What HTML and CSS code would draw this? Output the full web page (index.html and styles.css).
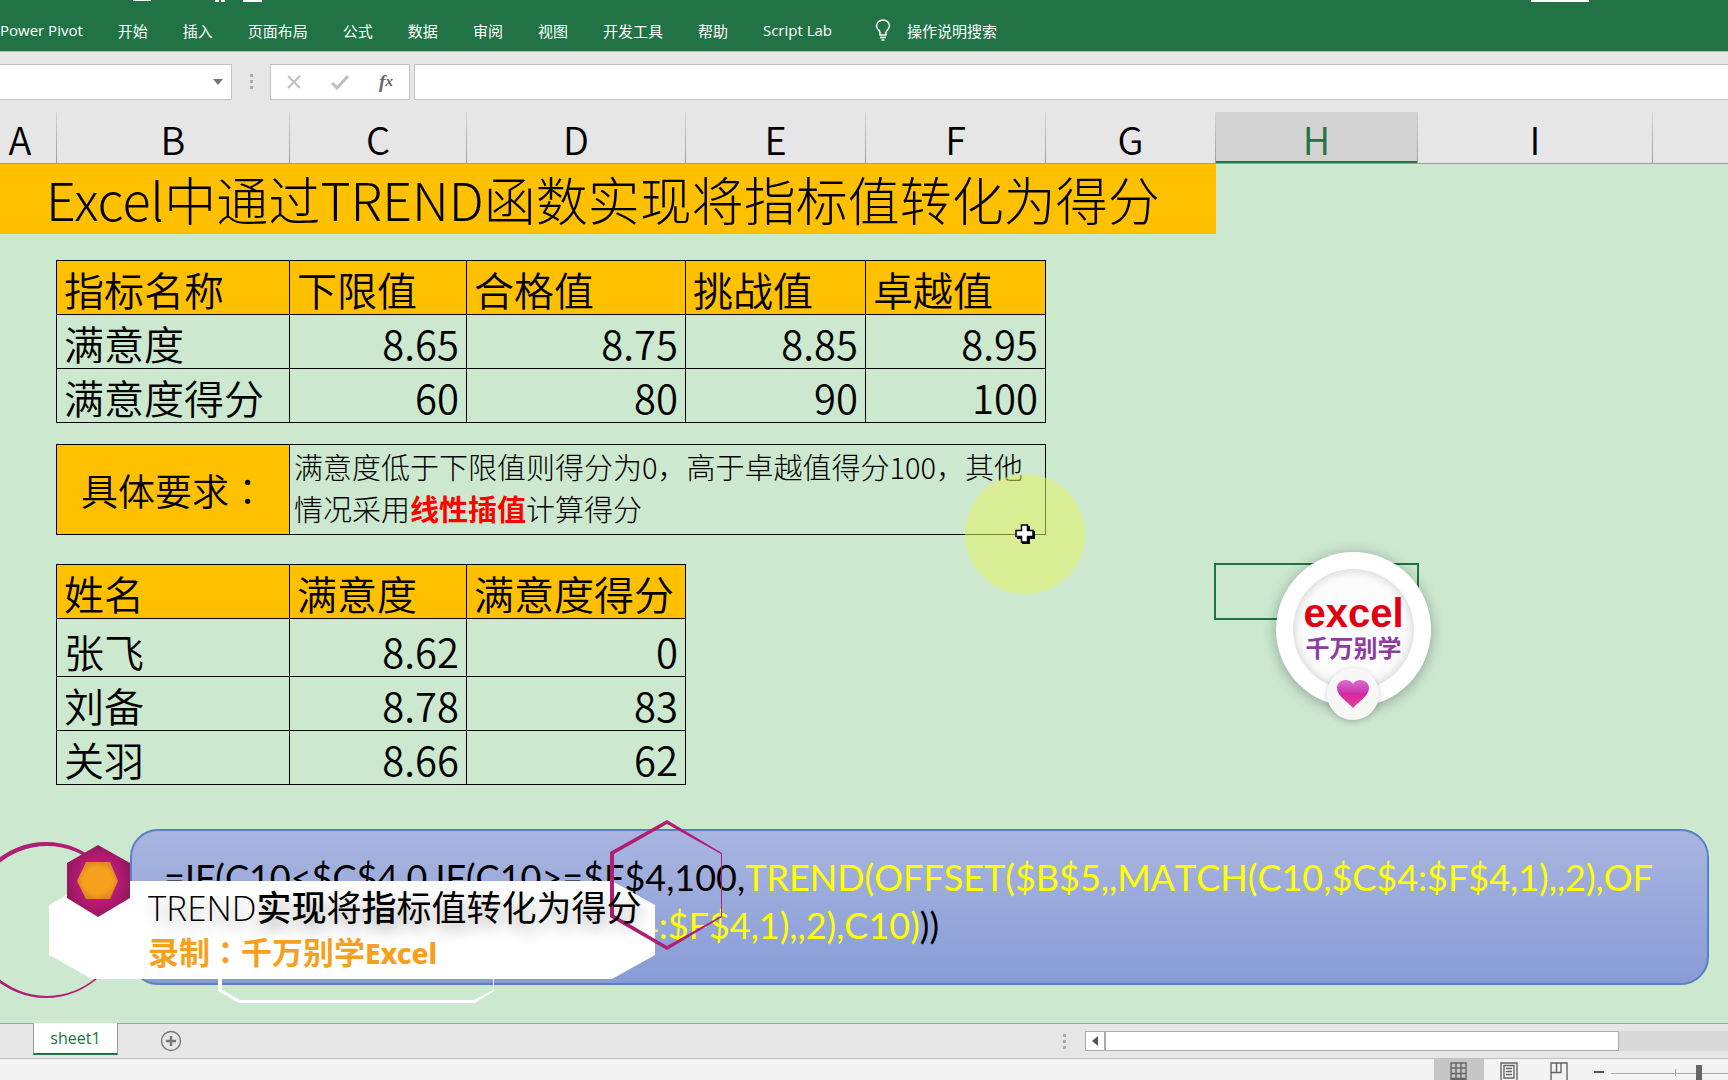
FILE: index.html
```html
<!DOCTYPE html>
<html lang="zh-CN">
<head>
<meta charset="utf-8">
<title>Excel - sheet1</title>
<link rel="stylesheet" href="styles.css">
</head>
<body>
<header class="ribbon">
  <svg class="quick-access" width="1728" height="2" aria-hidden="true"><path d="M133 0h18v1h-18zM215 0h4v2h-4zM221 0h4v2h-4zM243 0h19v2h-19zM1531 0h58v2h-58z" fill="#fff"/></svg>
  <nav class="ribbon-tabs">
    <a href="#">Power Pivot</a><a href="#">开始</a><a href="#">插入</a><a href="#">页面布局</a><a href="#">公式</a><a href="#">数据</a><a href="#">审阅</a><a href="#">视图</a><a href="#">开发工具</a><a href="#">帮助</a><a href="#">Script Lab</a>
    <a href="#" class="tell-me"><svg width="16" height="22" viewBox="0 0 16 22" fill="none" stroke="#fff" stroke-width="1.5" aria-hidden="true"><path d="M5 16v-3C4 11 1.500 9.800 1.500 7a6.500 6 0 0 1 13 0c0 2.800-2.500 4-3.500 6v3zM5 18.500h6M6.500 21h3"/></svg>操作说明搜索</a>
  </nav>
</header>

<div class="formula-bar">
  <button class="name-box" aria-label="名称框"><svg width="10" height="6" aria-hidden="true"><path d="M0 0h10L5 6z" fill="#777"/></svg></button>
  <span class="grip"></span>
  <div class="formula-tools">
    <button aria-label="取消"><svg width="16" height="16" viewBox="0 0 16 16" stroke="#bfbfbf" stroke-width="2" aria-hidden="true"><path d="M2 2l12 12M14 2L2 14"/></svg></button>
    <button aria-label="输入"><svg width="18" height="16" viewBox="0 0 18 16" fill="none" stroke="#bfbfbf" stroke-width="3" aria-hidden="true"><path d="M1 9l5 5L17 2"/></svg></button>
    <button aria-label="插入函数" class="fx">f<sub>x</sub></button>
  </div>
  <input class="formula-input" type="text" aria-label="编辑栏">
</div>

<div class="column-heads">
  <span>A</span><span>B</span><span>C</span><span>D</span><span>E</span><span>F</span><span>G</span><span class="active">H</span><span>I</span><span></span>
</div>

<main class="sheet">
  <h1 class="sheet-title">Excel中通过TREND函数实现将指标值转化为得分</h1>

  <table class="grid scale">
    <colgroup><col class="col-b"><col class="col-c"><col class="col-d"><col class="col-e"><col class="col-f"></colgroup>
    <thead><tr><th>指标名称</th><th>下限值</th><th>合格值</th><th>挑战值</th><th>卓越值</th></tr></thead>
    <tbody>
      <tr><td>满意度</td><td>8.65</td><td>8.75</td><td>8.85</td><td>8.95</td></tr>
      <tr><td>满意度得分</td><td>60</td><td>80</td><td>90</td><td>100</td></tr>
    </tbody>
  </table>

  <table class="grid rule">
    <colgroup><col class="col-b"><col></colgroup>
    <tbody><tr><th>具体要求<span class="colon" lang="zh-TW">：</span></th><td>满意度低于下限值则得分为0，高于卓越值得分100，其他<br>情况采用<strong>线性插值</strong>计算得分</td></tr></tbody>
  </table>

  <table class="grid people">
    <colgroup><col class="col-b"><col class="col-c"><col class="col-d"></colgroup>
    <thead><tr><th>姓名</th><th>满意度</th><th>满意度得分</th></tr></thead>
    <tbody>
      <tr class="tall"><td>张飞</td><td>8.62</td><td>0</td></tr>
      <tr><td>刘备</td><td>8.78</td><td>83</td></tr>
      <tr><td>关羽</td><td>8.66</td><td>62</td></tr>
    </tbody>
  </table>

  <div class="formula-card">=IF(C10&lt;$C$4,0,IF(C10&gt;=$F$4,100,<em>TREND(OFFSET($B$5,,MATCH(C10,$C$4:$F$4,1),,2),OF<br>FSET($B$4,,MATCH(C10,$C$4:$F$4,1),,2),C10)</em>))</div>

  <div class="selection"></div>

  <div class="badge">
    <span class="badge-face"><b>excel</b><i>千万别学</i></span>
    <span class="badge-heart"><svg width="32" height="28" viewBox="0 0 32 28" aria-hidden="true"><defs><linearGradient id="heart" x2="0" y2="1"><stop offset="0" stop-color="#dc6bcf"/><stop offset=".4" stop-color="#c93fb5"/><stop offset=".5" stop-color="#d9269c"/><stop offset="1" stop-color="#e0409e"/></linearGradient></defs><path d="M16 28C11 22 0 16 0 8 0 0 12-3 16 4c4-7 16-4 16 4 0 8-11 14-16 20z" fill="url(#heart)"/></svg></span>
  </div>

  <div class="pointer"><svg width="20" height="20" viewBox="0 0 20 20" aria-hidden="true"><path d="M7 2h8v5h5v8h-5v5H7v-5H2V7h5z"/><path d="M6.500 1h6v5.500H18v6h-5.500V18h-6v-5.500H1v-6h5.500z" fill="#fff" stroke="#000" stroke-width="1.500"/></svg></div>

  <div class="caption">
    <svg class="caption-art" width="740" height="190" viewBox="0 818 740 190" aria-hidden="true">
      <defs>
        <radialGradient id="plum"><stop offset=".5" stop-color="#c5187c"/><stop offset="1" stop-color="#94195f"/></radialGradient>
        <radialGradient id="amber"><stop offset=".7" stop-color="#f7a01d"/><stop offset="1" stop-color="#dc8a20"/></radialGradient>
      </defs>
      <path fill-rule="evenodd" fill="#b01f74" d="M46 842a78 78 0 1 1 0 156 78 78 0 1 1 0-156zm1 4a75 75 0 1 0 0 150 75 75 0 1 0 0-150z"/>
      <path d="M92 881H612L655 905V955L612 979H92L49 955V905z" fill="#fff"/>
      <path d="M218 979v12l21 12h236l19-12v-12h-1v11l-19 10H240l-18-10v-11z" fill="#fff"/>
      <path fill-rule="evenodd" fill="#b01f74" d="M667 820l55 33v64l-55 33-57-33v-65zm0 4l-53 30v61l53 31 54-30v-62z"/>
      <path d="M98 845l32 18v35l-32 19-31-19v-35z" fill="url(#plum)"/>
      <path d="M86 862h24l8 19-8 18H86l-9-18z" fill="url(#amber)"/>
    </svg>
    <p class="caption-title"><span>TREND</span><b>实现</b>将<b>指</b>标值转化为得分</p>
    <p class="caption-author">录制<span class="colon" lang="zh-TW">：</span>千万别学<span class="brand">Excel</span></p>
  </div>
</main>

<div class="sheet-bar">
  <button class="sheet-tab">sheet1</button>
  <button class="add-sheet" aria-label="新工作表"><svg width="22" height="22" viewBox="0 0 22 22" fill="none" stroke="#777" aria-hidden="true"><circle cx="11" cy="11" r="9.500" stroke-width="1.400"/><path d="M6 11h10M11 6v10" stroke-width="2.400"/></svg></button>
  <span class="grip"></span>
  <div class="scroller"><button class="scroll-left" aria-label="向左滚动"><svg width="6" height="10" aria-hidden="true"><path d="M6 0v10L0 5z" fill="#555"/></svg></button><span class="scroll-thumb"></span></div>
</div>

<footer class="status-bar">
  <button class="view active" aria-label="普通"><svg width="18" height="18" viewBox="0 0 18 18" fill="none" stroke="#666" stroke-width="1.400" aria-hidden="true"><path d="M1 1h15v17H1zM6 1v17M11 1v17M1 6h15M1 11.500h15M1 16.500h15"/></svg></button>
  <button class="view" aria-label="页面布局视图"><svg width="18" height="18" viewBox="0 0 18 18" fill="none" stroke="#666" stroke-width="1.400" aria-hidden="true"><path d="M1 1h16v18H1zM4 3.500h10V16H4zM6 6.500h6M6 9.500h6M6 12.500h6"/></svg></button>
  <button class="view" aria-label="分页预览"><svg width="18" height="18" viewBox="0 0 18 18" fill="none" stroke="#666" stroke-width="1.400" aria-hidden="true"><path d="M1 1h16v18H1zM1 10.500h10V1M6.500 1v9.500"/></svg></button>
  <svg class="zoom-slider" width="134" height="21" viewBox="0 0 134 21" aria-hidden="true"><path d="M0 13h10" stroke="#555" stroke-width="2"/><path d="M17 14.500h117M81.500 10v7" stroke="#aaa"/><path d="M102 6h6v15h-6z" fill="#666"/></svg>
</footer>
</body>
</html>
```
FILE: styles.css
```css
* { box-sizing: border-box; }

body {
  margin: 0;
  height: 100vh;
  display: flex;
  flex-direction: column;
  overflow: hidden;
  background: #e6e6e6;
  color: #000;
  font-family: "Noto Sans CJK SC", sans-serif;
}

button {
  border: 0;
  padding: 0;
  background: none;
  font: inherit;
  display: flex;
  align-items: center;
  justify-content: center;
}

/* Ribbon */
.ribbon {
  position: relative;
  flex: none;
  height: 52px;
  background: #217346;
  border-bottom: 1px solid #a3c2b0;
}
.quick-access { position: absolute; top: 0; left: 0; }
.ribbon-tabs {
  display: flex;
  align-items: center;
  gap: 35px;
  height: 60px;
  font-family: "Open Sans", "Noto Sans CJK SC", sans-serif;
  font-size: 15px;
  white-space: nowrap;
}
.ribbon-tabs a { color: #fff; text-decoration: none; }
.ribbon-tabs .tell-me { display: flex; align-items: center; gap: 16px; margin-left: 8px; }

/* Formula bar */
.formula-bar {
  flex: none;
  display: flex;
  align-items: center;
  height: 60px;
  padding-bottom: 1px;
}
.name-box, .formula-tools, .formula-input {
  height: 36px;
  background: #fff;
  border: 1px solid #c3c3c3;
}
.name-box {
  width: 232px;
  border-left: 0;
  justify-content: flex-end;
  padding-right: 8px;
}
.grip {
  width: 3px;
  height: 15px;
  background: repeating-linear-gradient(#aaa 0 3px, transparent 3px 6px);
}
.formula-bar .grip { margin: 0 17px 0 18px; }
.formula-tools {
  display: grid;
  grid-template-columns: repeat(3, 46px);
  width: 140px;
}
.fx {
  font: italic bold 19px "Liberation Serif", serif;
  color: #666;
}
.fx sub { font-size: 15px; line-height: 1; }
.formula-input { flex: 1; margin-left: 4px; border-right: 0; }

/* Column letters */
.column-heads {
  flex: none;
  display: grid;
  grid-template-columns: 57px 233px 177px 219px 180px 180px 170px 202px 235px 1fr;
  grid-template-rows: 100%;
  height: 52px;
  border-bottom: 1px solid #9b9b9b;
  font-size: 38px;
  font-weight: 350;
  line-height: 54px;
  text-align: center;
}
.column-heads span {
  border-right: 1px solid;
  border-image: linear-gradient(#d4d4d4, #9b9b9b) 1;
}
.column-heads span:first-child { padding-right: 16px; }
.column-heads span:last-child { border: 0; }
.column-heads .active {
  background: #d2d2d2;
  color: #217346;
  box-shadow: inset 0 -2px #217346;
}

/* Worksheet */
.sheet {
  position: relative;
  flex: 1;
  min-height: 0;
  overflow: hidden;
  background: #cce8cf;
}
.sheet-title {
  margin: 0 0 26px;
  width: 1216px;
  padding-left: 46px;
  background: #ffc000;
  font-size: 52px;
  font-weight: 300;
  line-height: 70px;
  white-space: nowrap;
}
.grid {
  table-layout: fixed;
  border-collapse: collapse;
  margin-left: 56px;
  font-size: 40px;
  line-height: 48px;
  white-space: nowrap;
}
.grid th, .grid td {
  border: 1px solid #000;
  padding: 2px 7px 0;
  text-align: right;
  font-weight: 350;
}
.grid th { background: #ffc000; }
.grid th, .grid td:first-child { text-align: left; }
.grid tr { height: 54px; }
.grid .tall { height: 58px; }
.grid .tall td { padding-top: 6px; }
.col-b { width: 233px; }
.col-c { width: 177px; }
.col-d { width: 219px; }
.col-e, .col-f { width: 180px; }
.scale, .rule { width: 990px; }
.people { width: 630px; }
.rule { margin-top: 21px; margin-bottom: 29px; }
.rule tr { height: 90px; }
.grid.rule th { font-size: 37px; padding: 0 0 0 24px; }
.grid.rule td {
  padding: 0 4px;
  font-size: 29px;
  font-weight: 300;
  line-height: 42px;
  text-align: left;
  vertical-align: top;
}
.rule strong { color: #f00; font-weight: 700; }

.formula-card {
  margin: 44px 19px 0 130px;
  height: 156px;
  padding: 22px 32px;
  border: 2px solid #5b7fc4;
  border-radius: 28px;
  background: linear-gradient(#a9b5e0, #879cd6);
  font: 36px/48px Lato, sans-serif;
  font-kerning: none;
  white-space: nowrap;
}
.formula-card em { color: #ff0; font-style: normal; }

/* Objects floating over the cells */
.selection {
  position: absolute;
  left: 1214px;
  top: 399px;
  width: 205px;
  height: 57px;
  border: 2px solid #217346;
}
.badge {
  position: absolute;
  left: 1276px;
  top: 388px;
  width: 155px;
  height: 155px;
  padding: 17px;
  border-radius: 50%;
  background: #fff;
  box-shadow: 0 2px 14px rgba(0, 0, 0, .3);
}
.badge-face {
  display: flex;
  flex-direction: column;
  align-items: center;
  height: 121px;
  padding-top: 22px;
  border-radius: 50%;
  background: #fcfcfc;
  box-shadow: inset 0 0 12px rgba(0, 0, 0, .2);
}
.badge-face b {
  color: #e00012;
  font: bold 40px/44px "Liberation Sans", sans-serif;
}
.badge-face i {
  color: #8e3aa0;
  font-size: 24px;
  font-style: normal;
  font-weight: 700;
  line-height: 24px;
}
.badge-heart {
  position: absolute;
  left: 51px;
  top: 116px;
  display: flex;
  align-items: center;
  justify-content: center;
  width: 52px;
  height: 52px;
  border-radius: 50%;
  background: #f7f7f7;
  box-shadow: 0 2px 6px rgba(0, 0, 0, .2);
}
.pointer {
  position: absolute;
  left: 965px;
  top: 310px;
  display: flex;
  align-items: center;
  justify-content: center;
  width: 120px;
  height: 120px;
  border-radius: 50%;
  background: rgba(226, 240, 100, .55);
}
.caption {
  position: absolute;
  left: 0;
  top: 654px;
  width: 740px;
  height: 190px;
  padding: 64px 0 0 148px;
}
.caption p { position: relative; margin: 0; white-space: nowrap; }
.caption-art { position: absolute; left: 0; top: 0; }
.caption-title {
  font-size: 35px;
  line-height: 48px;
  text-shadow: 2px 8px 14px rgba(0, 0, 0, .3);
}
.caption-title span { font-family: "Open Sans", sans-serif; font-weight: 300; }
.caption-title b { font-weight: 500; }
.caption-author {
  color: #f7a01d;
  font-size: 31px;
  font-weight: 700;
  line-height: 38px;
}
.colon { font-family: "Noto Sans CJK TC", sans-serif; }
.brand { font-family: "Noto Sans", sans-serif; font-size: 28px; font-weight: 800; }

/* Sheet tabs and horizontal scrollbar */
.sheet-bar {
  flex: none;
  display: flex;
  align-items: center;
  height: 36px;
  border-top: 1px solid #9aa39b;
  border-bottom: 1px solid #c0c0c0;
}
.sheet-tab {
  align-self: flex-start;
  width: 85px;
  height: 32px;
  margin: -1px 42px 0 33px;
  background: #fff;
  border: 1px solid #9b9b9b;
  border-top: 0;
  border-bottom: 2px solid #217346;
  color: #217346;
  font-family: "Open Sans", sans-serif;
  font-size: 16px;
}
.sheet-bar .grip { margin-left: auto; margin-right: 19px; }
.scroller {
  display: flex;
  width: 37.2%;
  height: 20px;
  background: #d9d9d9;
}
.scroll-left, .scroll-thumb { background: #fff; border: 1px solid #ababab; }
.scroll-left { width: 20px; }
.scroll-thumb { flex: none; width: 80%; }

/* Status bar */
.status-bar {
  flex: none;
  display: flex;
  justify-content: flex-end;
  height: 21px;
  background: #f3f3f3;
  overflow: hidden;
}
.view { width: 50px; height: 21px; padding-top: 3px; }
.view.active { background: #c6c6c6; }
.zoom-slider { margin-left: 10px; }
```
